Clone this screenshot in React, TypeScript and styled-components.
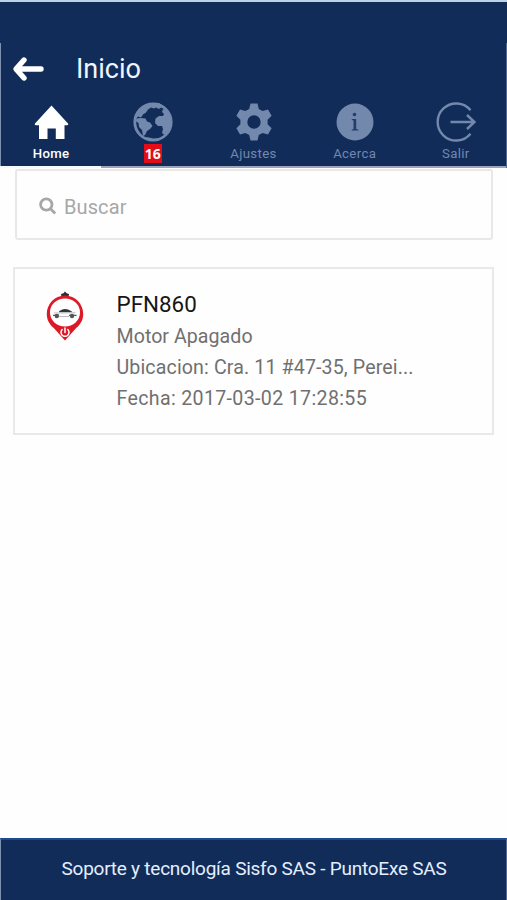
import React from "react";
import styled, { createGlobalStyle } from "styled-components";

const GlobalStyle = createGlobalStyle`
  * { box-sizing: border-box; }
  html, body { margin: 0; padding: 0; background: #fefefe; }
  body { font-family: Roboto, "Noto Sans", sans-serif; }
`;

const navy = "#122c5a";
const muted = "#7288ac";

const Screen = styled.div`
  width: 100%;
  height: 900px;
  display: flex;
  flex-direction: column;
  overflow: hidden;
`;

const Header = styled.header`
  flex: none;
  height: 168px;
  background: ${navy};
  border-top: 2px solid #bcd3e3;
  border-bottom: 2px solid #9ba3bd;
  display: flex;
  flex-direction: column;
`;

const StatusBar = styled.div`
  height: 41px;
  flex: none;
`;

const HeaderBody = styled.div`
  flex: 1;
  border-left: 1px solid #7e91b0;
  border-right: 1px solid #536a91;
`;

const TitleBar = styled.div`
  height: 54px;
  padding: 0 0 3px 11px;
  display: flex;
  align-items: center;
`;

const BackButton = styled.button`
  width: 32px;
  height: 26px;
  padding: 0;
  border: 0;
  background: none;
  line-height: 0;
`;

const Title = styled.h1`
  margin: 0 0 0 32px;
  font-size: 27px;
  font-weight: 400;
  color: #eef6ff;
`;

const Tabs = styled.nav`
  height: 71px;
  margin: 0 -1px;
  display: grid;
  grid-template-columns: repeat(5, 101.2px);
`;

const Tab = styled.div<{ $active?: boolean }>`
  height: 71px;
  padding: 4px 0 0 2px;
  display: flex;
  flex-direction: column;
  align-items: center;
  color: ${(p) => (p.$active ? "#ffffff" : muted)};
  border-bottom: 2px solid ${(p) => (p.$active ? "#f5f8ff" : "transparent")};
  svg { display: block; flex: none; }
`;

const TabLabel = styled.span<{ $active?: boolean }>`
  margin: 3px 1px 0 0;
  font-size: 13.2px;
  line-height: 16px;
  font-weight: ${(p) => (p.$active ? 500 : 400)};
  letter-spacing: ${(p) => (p.$active ? 0.3 : 0.35)}px;
`;

const Badge = styled.span`
  margin-top: 1px;
  width: 18px;
  height: 19px;
  flex: none;
  background: #e40c17;
  color: #fff;
  font: 700 14px/19px "Open Sans", "Noto Sans", sans-serif;
  text-align: center;
`;

const Content = styled.main`
  flex: 1;
  padding: 1px 13px 0 13px;
`;

const SearchBox = styled.div`
  height: 71px;
  margin: 0 1px 0 2px;
  padding-left: 22px;
  border: 2px solid #e8e8e8;
  border-radius: 3px;
  display: flex;
  align-items: center;
  color: #a7a7a7;
  svg { margin-top: 2px; }
`;

const SearchInput = styled.span`
  margin-left: 7px;
  padding-top: 4px;
  font-size: 20px;
  letter-spacing: 0.1px;
`;

const Card = styled.article`
  height: 168px;
  margin-top: 27px;
  padding: 20px 0 0 30px;
  border: 2px solid #e9e9e9;
  display: flex;
  align-items: flex-start;
`;

const Marker = styled.div`
  width: 42px;
  flex: none;
  margin-top: 2px;
`;

const Details = styled.div`
  margin-left: 29.5px;
  display: flex;
  flex-direction: column;
`;

const Plate = styled.h2`
  margin: 0 0 1px;
  font-size: 22.4px;
  line-height: 31px;
  font-weight: 400;
  letter-spacing: 0;
  color: #161616;
`;

const Detail = styled.p<{ $spacing: number }>`
  margin: 0;
  font-size: 19.6px;
  line-height: 31px;
  letter-spacing: ${(p) => p.$spacing}px;
  color: #707070;
  white-space: nowrap;
`;

const Footer = styled.footer`
  flex: none;
  height: 62px;
  background: ${navy};
  border-top: 2px solid #1d4a91;
  border-left: 1px solid #7e91b0;
  border-right: 1px solid #536a91;
  padding: 0 0 3px 1px;
  display: flex;
  align-items: center;
  justify-content: center;
  font-size: 19px;
  letter-spacing: -0.24px;
  color: #e4efff;
  white-space: nowrap;
`;

const BackIcon = () => (
  <svg width="32" height="26" viewBox="0 0 32 26" fill="none" stroke="#fff" strokeWidth="5.400" strokeLinecap="round" strokeLinejoin="round">
    <path d="M12 4 4 13l8 9M5 13h24" />
  </svg>
);

const HomeIcon = () => (
  <svg width="42" height="42" viewBox="0 0 42 42" fill="currentColor">
    <path d="M20.500 4.500 37 22.500c.6 1 .2 1.700-1 1.700h-2.500V38h-8.700V27.500h-8.300V38H8V24.200H5c-1.200 0-1.500-.8-1-1.700Z" />
  </svg>
);

const GlobeIcon = () => (
  <svg width="42" height="42" viewBox="0 0 42 42" fill="currentColor">
    <circle cx="21" cy="21" r="18.200" fill="none" stroke="currentColor" strokeWidth="2.800" />
    <path d="M7 10 12 4.500l8-2.500h7l6 4-4 .5-2 1.500-3-1.500-2 1-3-1-3 2-2 3-3 2-2 3-3-1-3 3Z" />
    <path d="m4.500 17.500 4-.5 5 .5 1.500 3 3 1 2.500 3.500-2.500 3-3 2-2 4-2 1-1-6-3-3-.5-4-3-2Z" />
    <path d="m31 8 4 1.500 3.500 7 .5 7-3 8-3.500 2.500-2.500-2 1-4-1-3h-4l-3-3 .5-4.500 3.500-2.500h4l1-2-2-2Z" />
    <path d="m13 36 4 .5 5 1.200 8-1.200-4 3.500H17Z" />
  </svg>
);

const GearIcon = () => (
  <svg width="42" height="42" viewBox="0 0 42 42" fill="currentColor">
    <path fillRule="evenodd" d="M17.500 2.500h7l1.300 5.400 3.800 2.200 5.400-1.600 3.600 6.200-4 4v4.600l4 4-3.600 6.200-5.400-1.600-3.800 2.200-1.300 5.400h-7l-1.300-5.400-3.800-2.200L7 33.500l-3.600-6.200 4-4v-4.600l-4-4L7 8.500l5.400 1.600 3.800-2.200ZM21 14.300a6.700 6.700 0 1 0 0 13.400 6.700 6.700 0 0 0 0-13.400Z" />
  </svg>
);

const InfoIcon = () => (
  <svg width="42" height="42" viewBox="0 0 42 42">
    <circle cx="21" cy="21" r="18.500" fill="currentColor" />
    <circle cx="20.500" cy="13.500" r="1.800" fill="#263d69" />
    <path d="M17.800 18h4.400v10l2.300.7v.9h-6.800v-.9l1.800-.7V19.600l-1.700-.6Z" fill="#263d69" />
  </svg>
);

const ExitIcon = () => (
  <svg width="42" height="42" viewBox="0 0 42 42" fill="none" stroke="currentColor" strokeWidth="2.400">
    <path d="M35.500 9.300a18.500 18.500 0 1 0 0 23.400M15.500 21h23M32 14l7.500 7-7.500 7" />
  </svg>
);

const SearchIcon = () => (
  <svg width="18" height="18" viewBox="0 0 18 18" fill="none" stroke="currentColor" strokeWidth="2.800">
    <circle cx="7.300" cy="7.500" r="5.700" />
    <path d="m11.500 11.800 4.700 4.700" />
  </svg>
);

const CarMarker = () => (
  <svg width="40" height="52" viewBox="0 0 40 52">
    <path d="M16.500 6 16 3l2.500-.8L20 .5l1.700 1.700L24 3l-.5 3Z" fill="#293035" />
    <path d="M20 4.500C9.500 4.500 1.800 13 1.800 23c0 6 2.800 10.500 7 14L20 49.500 31.200 37c4.200-3.500 7-8 7-14C38.200 13 30.500 4.500 20 4.500Z" fill="#dc1927" />
    <ellipse cx="20" cy="21.500" rx="15" ry="14" fill="#fff" />
    <path d="M14 20.500c3-3.200 8-3.500 12-.5l1.500 1.300H14Z" fill="#33383b" />
    <path d="m9 22 21.500-.2M14 25.500h10" stroke="#b9bcc0" strokeWidth="1" />
    <circle cx="11.800" cy="25" r="2.200" fill="#515659" />
    <circle cx="27" cy="25" r="2.200" fill="#515659" />
    <path d="M8 24.300h6M24 24.300h7.500" stroke="#515659" strokeWidth="1.200" />
    <path d="M17.200 38.500a4 4 0 1 0 5.600 0M20 37v4.400" fill="none" stroke="#fff" strokeWidth="1.500" strokeLinecap="round" />
  </svg>
);

const tabs = [
  { label: "Home", Icon: HomeIcon, active: true },
  { badge: "16", Icon: GlobeIcon },
  { label: "Ajustes", Icon: GearIcon },
  { label: "Acerca", Icon: InfoIcon },
  { label: "Salir", Icon: ExitIcon },
];

export default function App() {
  return (
    <Screen>
      <GlobalStyle />
      <Header>
        <StatusBar />
        <HeaderBody>
          <TitleBar>
            <BackButton aria-label="Atrás"><BackIcon /></BackButton>
            <Title>Inicio</Title>
          </TitleBar>
          <Tabs>
            {tabs.map(({ label, badge, Icon, active }, index) => (
              <Tab key={index} $active={active}>
                <Icon />
                {badge ? <Badge>{badge}</Badge> : <TabLabel $active={active}>{label}</TabLabel>}
              </Tab>
            ))}
          </Tabs>
        </HeaderBody>
      </Header>
      <Content>
        <SearchBox>
          <SearchIcon />
          <SearchInput>Buscar</SearchInput>
        </SearchBox>
        <Card>
          <Marker><CarMarker /></Marker>
          <Details>
            <Plate>PFN860</Plate>
            <Detail $spacing={0.05}>Motor Apagado</Detail>
            <Detail $spacing={0.13}>Ubicacion: Cra. 11 #47-35, Perei...</Detail>
            <Detail $spacing={0.34}>Fecha: 2017-03-02 17:28:55</Detail>
          </Details>
        </Card>
      </Content>
      <Footer>Soporte y tecnología Sisfo SAS - PuntoExe SAS</Footer>
    </Screen>
  );
}
